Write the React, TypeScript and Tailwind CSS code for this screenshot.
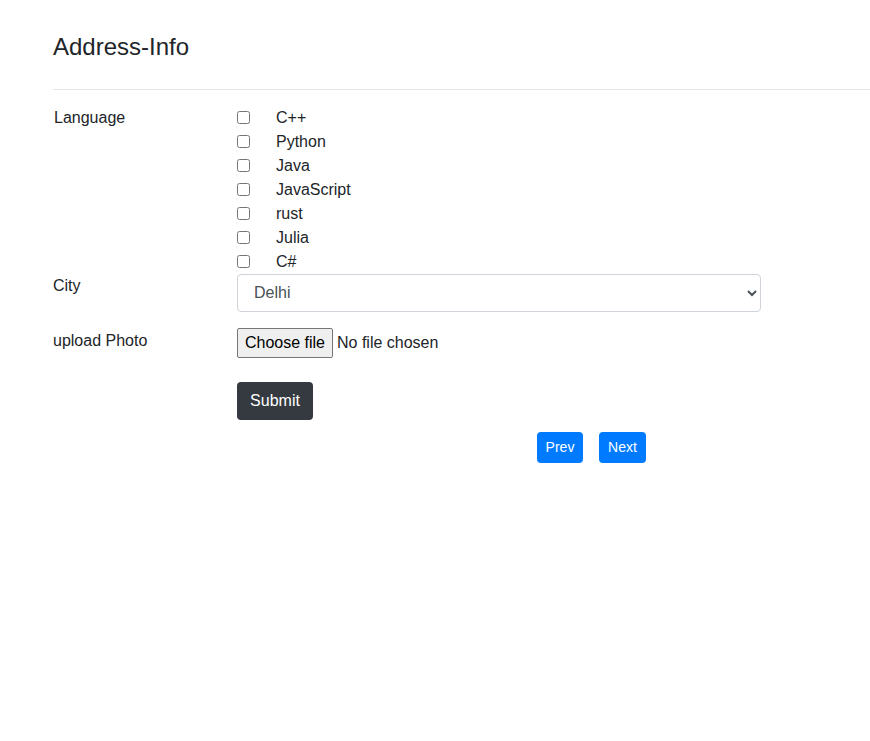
const languages = ["C++", "Python", "Java", "JavaScript", "rust", "Julia", "C#"];

export default function App() {
  return (
    <div className="min-h-screen bg-white pl-[53px] pt-[33px] text-[16px] leading-6 text-[#212529] font-['Liberation_Sans',Arial,sans-serif]">
      <h4 className="text-[24px] leading-[28.8px] font-normal">Address-Info</h4>
      <hr className="mt-[27px] border-t border-[#e6e6e6]" />

      <form className="mt-[16px]">
        <div className="flex">
          <label className="w-[184px] pl-px">Language</label>
          <div className="flex flex-col">
            {languages.map((lang) => (
              <label key={lang} className="flex h-6 items-center">
                <input type="checkbox" className="m-0 h-[13px] w-[13px]" />
                <span className="ml-[26px]">{lang}</span>
              </label>
            ))}
          </div>
        </div>

        <div className="flex">
          <label className="w-[184px]">City</label>
          <select className="h-[38px] w-[524px] rounded border border-[#ced4da] bg-white px-3 text-[#495057]">
            <option>Delhi</option>
            <option>Mumbai</option>
            <option>Kolkata</option>
          </select>
        </div>

        <div className="mt-4 flex">
          <label className="w-[184px] pt-px">upload Photo</label>
          <label className="flex h-[30px] items-center">
            <span className="flex h-[30px] w-[96px] items-center justify-center rounded-[2px] border border-[#767676] bg-[#efefef] text-black">
              Choose file
            </span>
            <span className="ml-1">No file chosen</span>
            <input type="file" className="hidden" />
          </label>
        </div>

        <div className="mt-6 pl-[184px]">
          <button type="button" className="h-[38px] w-[76px] rounded bg-[#343a40] text-white">
            Submit
          </button>
          <div className="mt-3 flex gap-4 pl-[300px]">
            <button type="button" className="h-[31px] w-[46px] rounded bg-[#007bff] text-[14px] text-white">
              Prev
            </button>
            <button type="button" className="h-[31px] w-[47px] rounded bg-[#007bff] text-[14px] text-white">
              Next
            </button>
          </div>
        </div>
      </form>
    </div>
  );
}
